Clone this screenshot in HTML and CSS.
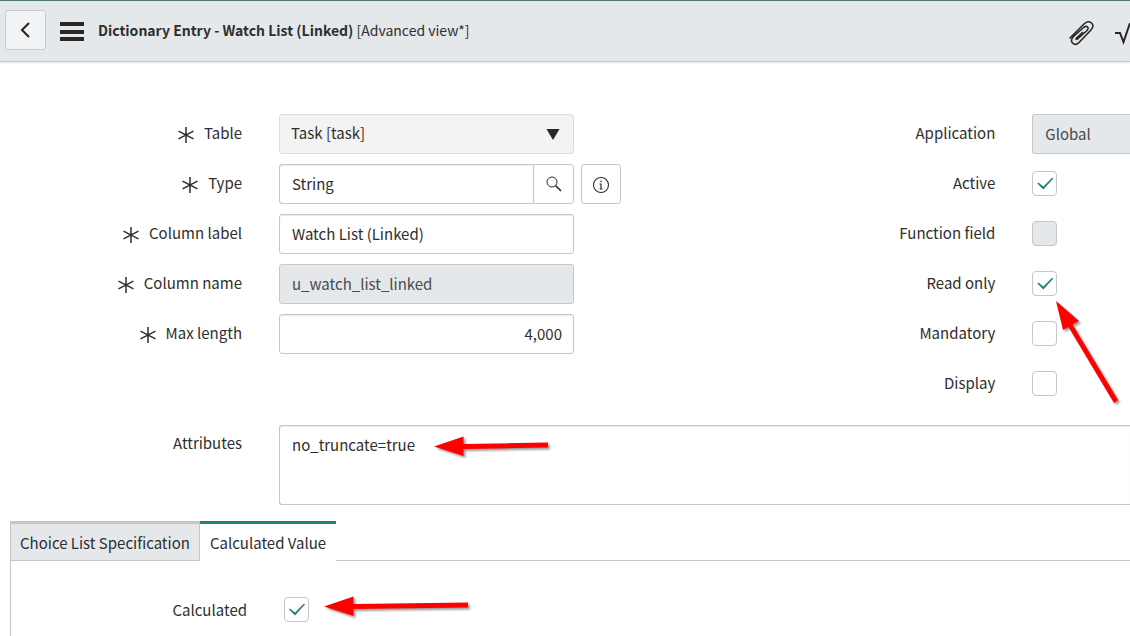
FILE: index.html
```html
<!DOCTYPE html>
<html lang="en">

<head>
  <meta charset="UTF-8">
  <meta name="viewport" content="width=device-width, initial-scale=1.0">
  <title>Dictionary Entry - Watch List (Linked)</title>

  <link rel="stylesheet" href="styles.css">
</head>

<body>
  <!-- Asterisk shared by the mandatory fields -->
  <svg class="sprite" aria-hidden="true">
    <symbol id="required" viewBox="0 0 16 16">
      <path d="M8 0v16M.5 4.2l15 7.6M.5 11.8l15-7.6" fill="none" stroke="#2e2e2e" stroke-width="1.5" />
    </symbol>
  </svg>

  <header class="header">
    <button class="back-button" type="button" aria-label="Back">
      <svg width="11" height="16" viewBox="0 0 11 16">
        <path d="M9 1L2 8l7 7" fill="none" stroke="#222" stroke-width="2" />
      </svg>
    </button>
    <button class="icon-button menu-button" type="button" aria-label="Menu">
      <svg width="26" height="20" viewBox="0 0 26 20">
        <path d="M1 3h24M1 11h24M1 18h24" stroke="#2b2625" stroke-width="4" />
      </svg>
    </button>
    <h1 class="title"><strong>Dictionary Entry - Watch List (Linked)</strong> [Advanced view*]</h1>
    <div class="header-actions">
      <button class="icon-button" type="button" aria-label="Attachments">
        <svg width="26" height="26" viewBox="0 0 26 26">
          <path d="M1.5 18.500L16 4C18 2 21 1 23.500 3C26 5.500 25 8 22.500 10.500L11 22.500C9 24.500 6.500 25 4.500 23C2.500 20.500 3.500 18.500 5.500 16.500L15 8C17 6 18.500 6 19.500 7C20.700 8.200 20 9.500 18.500 11L9.500 19C8.500 20 7.500 19 8.500 18L15 12" fill="none" stroke="#2b2625" stroke-width="1.600" stroke-linejoin="round" />
        </svg>
      </button>
      <button class="icon-button" type="button" aria-label="Activity">
        <svg width="15" height="26" viewBox="0 0 15 26">
          <path d="M0 13h5l3.500 9L15 3" fill="none" stroke="#2b2625" stroke-width="2" />
        </svg>
      </button>
    </div>
  </header>

  <form class="form">
    <div class="columns">
      <div class="column">
        <div class="row">
          <label class="label" for="table"><svg class="required"><use href="#required" /></svg>Table</label>
          <div class="field select-field">
            <select class="control select" id="table">
              <option>Task [task]</option>
            </select>
            <svg class="caret" width="14" height="11" viewBox="0 0 14 11">
              <path d="M.5 0h13L7 11z" fill="#2b2625" />
            </svg>
          </div>
        </div>
        <div class="row">
          <label class="label" for="type"><svg class="required"><use href="#required" /></svg>Type</label>
          <div class="field input-group">
            <input class="control" id="type" type="text" value="String">
            <button class="square-button lookup" type="button" aria-label="Look up type">
              <svg width="16" height="16" viewBox="0 0 16 16">
                <circle cx="6" cy="6" r="5" fill="none" stroke="#2e2e2e" stroke-width="1" />
                <path d="M9.500 9.500L15 15" stroke="#2e2e2e" stroke-width="1.700" />
              </svg>
            </button>
          </div>
          <button class="square-button info" type="button" aria-label="Preview type">
            <svg width="18" height="20" viewBox="0 0 18 20">
              <circle cx="9" cy="11" r="7.500" fill="none" stroke="#2e2e2e" stroke-width="1.100" />
              <path d="M9 6.500v1.700M9 9.500v5.500M7.500 10H9M7.500 15h3" fill="none" stroke="#2e2e2e" stroke-width="1.200" />
            </svg>
          </button>
        </div>
        <div class="row">
          <label class="label" for="column-label"><svg class="required"><use href="#required" /></svg>Column label</label>
          <input class="control field" id="column-label" type="text" value="Watch List (Linked)">
        </div>
        <div class="row">
          <label class="label" for="column-name"><svg class="required"><use href="#required" /></svg>Column name</label>
          <input class="control field" id="column-name" type="text" value="u_watch_list_linked" readonly>
        </div>
        <div class="row">
          <label class="label" for="max-length"><svg class="required"><use href="#required" /></svg>Max length</label>
          <input class="control field number" id="max-length" type="text" value="4,000">
        </div>
      </div>

      <div class="column">
        <div class="row">
          <label class="label" for="application">Application</label>
          <input class="control bleed" id="application" type="text" value="Global" readonly>
        </div>
        <div class="row">
          <label class="label" for="active">Active</label>
          <input class="checkbox" id="active" type="checkbox" checked>
        </div>
        <div class="row">
          <label class="label" for="function-field">Function field</label>
          <input class="checkbox" id="function-field" type="checkbox" disabled>
        </div>
        <div class="row">
          <label class="label" for="read-only">Read only</label>
          <input class="checkbox" id="read-only" type="checkbox" checked>
          <svg class="arrow arrow-read-only" width="70" height="110" viewBox="0 0 70 110">
            <path d="M1 1l23 20-6.500 3.500L63 100l-4 3L13.500 27 8 30z" fill="#f00" />
          </svg>
        </div>
        <div class="row">
          <label class="label" for="mandatory">Mandatory</label>
          <input class="checkbox" id="mandatory" type="checkbox">
        </div>
        <div class="row">
          <label class="label" for="display">Display</label>
          <input class="checkbox" id="display" type="checkbox">
        </div>
      </div>
    </div>

    <div class="row attributes-row">
      <label class="label" for="attributes">Attributes</label>
      <textarea class="control bleed" id="attributes">no_truncate=true</textarea>
      <svg class="arrow arrow-attributes" width="120" height="26" viewBox="0 0 120 26">
        <path d="M0 11.500L29.500 1.500v7.500L114 7.500v5L29.500 14v7z" fill="#f00" />
      </svg>
    </div>

    <div class="tabs" role="tablist">
      <button class="tab" type="button" role="tab" aria-selected="false">Choice List Specification</button>
      <button class="tab active" type="button" role="tab" aria-selected="true">Calculated Value</button>
    </div>
    <div class="panel" role="tabpanel">
      <div class="row">
        <label class="label" for="calculated">Calculated</label>
        <input class="checkbox" id="calculated" type="checkbox" checked>
        <svg class="arrow arrow-calculated" width="150" height="26" viewBox="0 0 150 26">
          <path d="M0 11.500L29.500 1.500v7.500L144 7.500v5L29.500 14v7z" fill="#f00" />
        </svg>
      </div>
    </div>
  </form>
</body>

</html>
```
FILE: styles.css
```css
* {
  box-sizing: border-box;
}

body {
  display: flex;
  flex-direction: column;
  min-height: 100vh;
  margin: 0;
  overflow-x: hidden;
  background-color: #fff;
  color: #2e2e2e;
  font-family: "Noto Sans CJK SC", "Noto Sans", sans-serif;
  font-size: 15px;
  line-height: 20px;
}

button,
input,
select,
textarea {
  margin: 0;
  font: inherit;
  color: inherit;
}

button {
  cursor: pointer;
}

svg {
  flex: none;
}

.sprite {
  position: absolute;
  width: 0;
  height: 0;
}

/* Header bar */
.header {
  display: flex;
  align-items: center;
  height: 62px;
  padding-left: 5px;
  border-top: 1px solid #4f7b6c;
  border-bottom: 1px solid #c6c9cb;
  background-color: #e4e8eb;
  box-shadow: 0 1px 2px #e4e4e4;
}

.back-button {
  display: flex;
  align-items: center;
  justify-content: center;
  width: 41px;
  height: 40px;
  margin-bottom: 2px;
  padding: 0;
  border: 1px solid #c8cacc;
  border-radius: 3px;
  background-color: #f2f3f5;
}

.icon-button {
  display: flex;
  padding: 0;
  border: none;
  background: none;
}

.menu-button {
  margin: 0 13px;
}

.title {
  margin: 0 0 2px;
  font-size: 14px;
  font-weight: normal;
}

.header-actions {
  display: flex;
  gap: 21px;
  margin-top: 3px;
  margin-left: auto;
}

/* Form */
.form {
  display: flex;
  flex: 1;
  flex-direction: column;
  padding-top: 52px;
}

.columns {
  display: grid;
  grid-template-columns: minmax(0, 2fr) minmax(0, 1fr);
}

.column {
  display: flex;
  flex-direction: column;
  gap: 10px;
}

.row {
  position: relative;
  display: flex;
  align-items: center;
  height: 40px;
}

.label {
  display: flex;
  flex: none;
  align-items: center;
  justify-content: flex-end;
  gap: 10px;
  width: 242px;
  margin-right: 37px;
  padding-bottom: 2px;
}

.required {
  width: 16px;
  height: 16px;
  margin-top: 4px;
}

.field {
  width: 295px;
}

.control {
  height: 40px;
  padding: 0 12px 2px;
  border: 1px solid #c5c7c9;
  border-radius: 3px;
  outline: none;
  background-color: #fff;
  box-shadow: inset 0 1px 1px #ececec;
}

.control:read-only:not(select) {
  background-color: #e4e8eb;
  color: #4a4a4a;
}

.number {
  padding-right: 11px;
  text-align: right;
}

/* Controls that run off the right side of the window */
.bleed {
  flex: 1;
  min-width: 0;
  border-right: none;
  border-radius: 3px 0 0 3px;
}

.select-field {
  position: relative;
}

.select {
  width: 100%;
  padding: 0 11px 2px;
  border-color: #dcdcdc;
  background-color: #f3f3f3;
  box-shadow: none;
  appearance: none;
}

.caret {
  position: absolute;
  top: 15px;
  right: 14px;
  pointer-events: none;
}

.input-group {
  display: flex;
}

.input-group .control {
  flex: 1;
  min-width: 0;
  border-right: none;
  border-radius: 3px 0 0 3px;
}

.square-button {
  display: flex;
  flex: none;
  align-items: center;
  justify-content: center;
  width: 40px;
  height: 40px;
  padding: 0;
  border: 1px solid #c5c7c9;
  border-radius: 3px;
  background-color: #fff;
}

.lookup {
  width: 41px;
  border-radius: 0 3px 3px 0;
}

.info {
  margin-left: 7px;
}

.checkbox {
  display: grid;
  flex: none;
  place-content: center;
  width: 25px;
  height: 25px;
  margin-bottom: 1px;
  border: 1px solid #c5c7c9;
  border-radius: 4px;
  background-color: #fff;
  appearance: none;
}

.checkbox:disabled {
  background-color: #e4e8eb;
}

.checkbox:checked::before {
  content: "";
  width: 16px;
  height: 12px;
  margin-left: 1px;
  background-color: #1f8476;
  clip-path: polygon(0 6px, 1px 5px, 6px 9px, 15px 0, 16px 1px, 6px 12px);
}

.attributes-row {
  align-items: flex-start;
  height: 80px;
  margin-top: 21px;
}

.attributes-row .label {
  height: 38px;
}

.attributes-row .control {
  height: 80px;
  padding: 9px 12px;
  resize: none;
}

/* Tabs */
.tabs {
  display: flex;
  margin: 16px 0 0 10px;
}

.tabs::after {
  content: "";
  flex: 1;
  border-bottom: 1px solid #c5c7c9;
}

.tab {
  height: 40px;
  padding: 2px 9px 0;
  border: 1px solid #c5c7c9;
  border-top: 3px solid #c5c7c9;
  background-color: #e4e8eb;
  white-space: nowrap;
}

.tab.active {
  padding: 2px 10px 0;
  border-top-color: #1f8476;
  border-right: none;
  border-bottom-color: transparent;
  border-left: none;
  background-color: #fff;
}

.panel {
  flex: 1;
  margin-left: 10px;
  padding-top: 29px;
  border-left: 1px solid #c5c7c9;
}

.panel .label {
  width: 236px;
  padding-bottom: 0;
}

/* Pointer arrows */
.arrow {
  position: absolute;
  pointer-events: none;
  filter: drop-shadow(2px 2px 1px rgba(0, 0, 0, 0.4));
}

.arrow-read-only {
  top: 36px;
  left: 302px;
}

.arrow-attributes {
  top: 10px;
  left: 434px;
}

.arrow-calculated {
  top: 5px;
  left: 313px;
}
```
